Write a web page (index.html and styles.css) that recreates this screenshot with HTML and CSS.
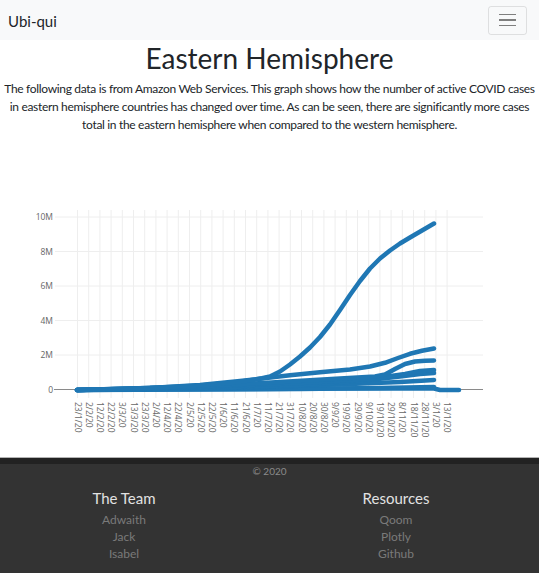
FILE: index.html
```html
<!DOCTYPE html>
<html lang="en">
<head>
<meta charset="utf-8">
<title>Ubi-qui – Eastern Hemisphere</title>
<link rel="stylesheet" href="styles.css">
</head>
<body>
<nav class="navbar">
  <span class="brand">Ubi-qui</span>
  <button class="toggler" type="button" aria-label="Toggle navigation"><span></span><span></span><span></span></button>
</nav>
<main class="content">
  <h1 class="title">Eastern Hemisphere</h1>
  <p class="intro">The following data is from Amazon Web Services. This graph shows how the number of active COVID cases in eastern hemisphere countries has changed over time. As can be seen, there are significantly more cases total in the eastern hemisphere when compared to the western hemisphere.</p>
  <div class="chart">
    <svg class="chart-svg" width="539" height="325" viewBox="0 133 539 325" xmlns="http://www.w3.org/2000/svg">
      <g class="grid-v" stroke="#eeeeee" stroke-width="1">
        <line x1="77.5" y1="210" x2="77.5" y2="398"/><line x1="88.7" y1="210" x2="88.7" y2="398"/><line x1="99.9" y1="210" x2="99.9" y2="398"/><line x1="111.1" y1="210" x2="111.1" y2="398"/><line x1="122.3" y1="210" x2="122.3" y2="398"/><line x1="133.5" y1="210" x2="133.5" y2="398"/><line x1="144.7" y1="210" x2="144.7" y2="398"/><line x1="155.9" y1="210" x2="155.9" y2="398"/><line x1="167.1" y1="210" x2="167.1" y2="398"/><line x1="178.3" y1="210" x2="178.3" y2="398"/><line x1="189.5" y1="210" x2="189.5" y2="398"/><line x1="200.7" y1="210" x2="200.7" y2="398"/><line x1="211.9" y1="210" x2="211.9" y2="398"/><line x1="223.1" y1="210" x2="223.1" y2="398"/><line x1="234.3" y1="210" x2="234.3" y2="398"/><line x1="245.5" y1="210" x2="245.5" y2="398"/><line x1="256.7" y1="210" x2="256.7" y2="398"/><line x1="267.9" y1="210" x2="267.9" y2="398"/><line x1="279.1" y1="210" x2="279.1" y2="398"/><line x1="290.3" y1="210" x2="290.3" y2="398"/><line x1="301.5" y1="210" x2="301.5" y2="398"/><line x1="312.7" y1="210" x2="312.7" y2="398"/><line x1="323.9" y1="210" x2="323.9" y2="398"/><line x1="335.1" y1="210" x2="335.1" y2="398"/><line x1="346.3" y1="210" x2="346.3" y2="398"/><line x1="357.5" y1="210" x2="357.5" y2="398"/><line x1="368.7" y1="210" x2="368.7" y2="398"/><line x1="379.9" y1="210" x2="379.9" y2="398"/><line x1="391.1" y1="210" x2="391.1" y2="398"/><line x1="402.3" y1="210" x2="402.3" y2="398"/><line x1="413.5" y1="210" x2="413.5" y2="398"/><line x1="424.7" y1="210" x2="424.7" y2="398"/><line x1="435.9" y1="210" x2="435.9" y2="398"/><line x1="447.1" y1="210" x2="447.1" y2="398"/>
      </g>
      <g class="grid-h" stroke="#eeeeee" stroke-width="1">
        <line x1="55" y1="217" x2="483" y2="217"/><line x1="55" y1="251.5" x2="483" y2="251.5"/><line x1="55" y1="286" x2="483" y2="286"/><line x1="55" y1="320.5" x2="483" y2="320.5"/><line x1="55" y1="355" x2="483" y2="355"/>
      </g>
      <line class="zero" x1="54" y1="389.5" x2="483" y2="389.5" stroke="#8a8a8a" stroke-width="1"/>
      <g class="y-labels" font-family="'Open Sans', 'Noto Sans', sans-serif" font-size="8.5" fill="#666" text-anchor="end">
        <text x="53" y="220">10M</text><text x="53" y="254.5">8M</text><text x="53" y="289">6M</text><text x="53" y="323.5">4M</text><text x="53" y="358">2M</text><text x="53" y="392.5">0</text>
      </g>
      <g class="traces" fill="none" stroke="#1f77b4" stroke-width="4.5" stroke-linejoin="round" stroke-linecap="round">
        <polyline points="77,390 150,389.5 250,389 330,388.5 434,388.5 440,390 459,390"/>
        <polyline points="77,390 200,389.5 300,389 380,388 434,387"/>
        <polyline points="77,390 150,389 250,387.5 350,384 400,382 434,380"/>
        <polyline points="77,390 200,388 300,385 360,381 400,376.5 420,374 434,373"/>
        <polyline points="77,390 200,387 300,383 370,379 405,374 420,371 434,370"/>
        <polyline points="77,390 200,386.5 280,382 340,378.5 375,376.5 385,374.5 395,369 405,364 415,361.5 425,360.8 434,360.5"/>
        <polyline points="77,390 150,388 200,385 240,381 262,378.5 290,375.2 320,372.3 350,369.4 370,366.5 385,362.8 398,358 410,353.8 422,350.8 434,348.5"/>
        <polyline points="77,390 120,389 160,387.5 200,385.5 235,382.5 255,379.5 262,378.2 270,376.5 280,371.5 290,364.5 300,356.5 310,347.5 320,337 330,324.5 340,310 350,295 360,281 370,268.5 380,258.5 390,250.5 400,243.5 410,237.5 422,230.5 434,223.5"/>
      </g>
      <g class="x-labels" font-family="'Open Sans', 'Noto Sans', sans-serif" font-size="8.5" fill="#666">
        <text transform="translate(74.5,402) rotate(90)">23/1/20</text>
        <text transform="translate(85.7,402) rotate(90)">2/2/20</text>
        <text transform="translate(96.9,402) rotate(90)">12/2/20</text>
        <text transform="translate(108.1,402) rotate(90)">22/2/20</text>
        <text transform="translate(119.3,402) rotate(90)">3/3/20</text>
        <text transform="translate(130.5,402) rotate(90)">13/3/20</text>
        <text transform="translate(141.7,402) rotate(90)">23/3/20</text>
        <text transform="translate(152.9,402) rotate(90)">2/4/20</text>
        <text transform="translate(164.1,402) rotate(90)">12/4/20</text>
        <text transform="translate(175.3,402) rotate(90)">22/4/20</text>
        <text transform="translate(186.5,402) rotate(90)">2/5/20</text>
        <text transform="translate(197.7,402) rotate(90)">12/5/20</text>
        <text transform="translate(208.9,402) rotate(90)">22/5/20</text>
        <text transform="translate(220.1,402) rotate(90)">1/6/20</text>
        <text transform="translate(231.3,402) rotate(90)">11/6/20</text>
        <text transform="translate(242.5,402) rotate(90)">21/6/20</text>
        <text transform="translate(253.7,402) rotate(90)">1/7/20</text>
        <text transform="translate(264.9,402) rotate(90)">11/7/20</text>
        <text transform="translate(276.1,402) rotate(90)">21/7/20</text>
        <text transform="translate(287.3,402) rotate(90)">31/7/20</text>
        <text transform="translate(298.5,402) rotate(90)">10/8/20</text>
        <text transform="translate(309.7,402) rotate(90)">20/8/20</text>
        <text transform="translate(320.9,402) rotate(90)">30/8/20</text>
        <text transform="translate(332.1,402) rotate(90)">9/9/20</text>
        <text transform="translate(343.3,402) rotate(90)">19/9/20</text>
        <text transform="translate(354.5,402) rotate(90)">29/9/20</text>
        <text transform="translate(365.7,402) rotate(90)">9/10/20</text>
        <text transform="translate(376.9,402) rotate(90)">19/10/20</text>
        <text transform="translate(388.1,402) rotate(90)">29/10/20</text>
        <text transform="translate(399.3,402) rotate(90)">8/11/20</text>
        <text transform="translate(410.5,402) rotate(90)">18/11/20</text>
        <text transform="translate(421.7,402) rotate(90)">28/11/20</text>
        <text transform="translate(432.9,402) rotate(90)">3/1/20</text>
        <text transform="translate(444.1,402) rotate(90)">13/1/20</text>
      </g>
    </svg>
  </div>
</main>
<footer class="footer">
  <div class="copyright">© 2020</div>
  <div class="footer-cols">
    <div class="footer-col">
      <h5 class="footer-heading">The Team</h5>
      <a class="footer-link" href="#">Adwaith</a>
      <a class="footer-link" href="#">Jack</a>
      <a class="footer-link" href="#">Isabel</a>
    </div>
    <div class="footer-col">
      <h5 class="footer-heading">Resources</h5>
      <a class="footer-link" href="#">Qoom</a>
      <a class="footer-link" href="#">Plotly</a>
      <a class="footer-link" href="#">Github</a>
    </div>
  </div>
</footer>
</body>
</html>
```

FILE: styles.css
```css
html, body {
  margin: 0;
  padding: 0;
}

body {
  font-family: "Segoe UI", Lato, "Open Sans", sans-serif;
  font-size: 12px;
  line-height: 18px;
  color: #212529;
  background: #ffffff;
  overflow-x: hidden;
}

.navbar {
  height: 40px;
  box-sizing: border-box;
  background: #f8f9fa;
  display: flex;
  align-items: center;
  justify-content: space-between;
  padding: 0 12px 0 8px;
}

.brand {
  font-size: 15px;
  line-height: 20px;
  color: #212529;
  margin-top: 1px;
}

.toggler {
  width: 39px;
  height: 29px;
  box-sizing: border-box;
  border: 1px solid rgba(0, 0, 0, 0.1);
  border-radius: 3px;
  background: transparent;
  padding: 0;
  display: flex;
  flex-direction: column;
  align-items: center;
  justify-content: center;
  gap: 4px;
}

.toggler span {
  display: block;
  width: 17px;
  height: 1.5px;
  background: #7f7f7f;
}

.content {
  display: flex;
  flex-direction: column;
}

.title {
  font-size: 28px;
  font-weight: 400;
  line-height: 36px;
  margin: 0 0 3px;
  text-align: center;
  color: #212529;
}

.intro {
  margin: 0;
  padding: 0;
  height: 54px;
  text-align: center;
  letter-spacing: -0.32px;
  position: relative;
  top: 1px;
}

.chart {
  height: 325px;
}

.chart-svg {
  display: block;
}

.footer {
  background: #333333;
  border-top: 6px solid #222222;
  box-shadow: 0 -1px 0 #b3b3b3;
  padding-bottom: 20px;
  text-align: center;
}

.copyright {
  font-size: 10px;
  line-height: 14px;
  color: #8a8a8a;
}

.footer-cols {
  display: grid;
  grid-template-columns: 1fr 1fr;
  margin: 10px 7px 0 -12px;
}

.footer-col {
  display: flex;
  flex-direction: column;
  align-items: center;
}

.footer-heading {
  font-size: 15px;
  font-weight: 400;
  line-height: 20px;
  margin: 0 0 3px;
  color: #e2e2e2;
}

.footer-link {
  font-size: 12px;
  line-height: 17px;
  color: #7a7a7a;
  text-decoration: none;
}
```
